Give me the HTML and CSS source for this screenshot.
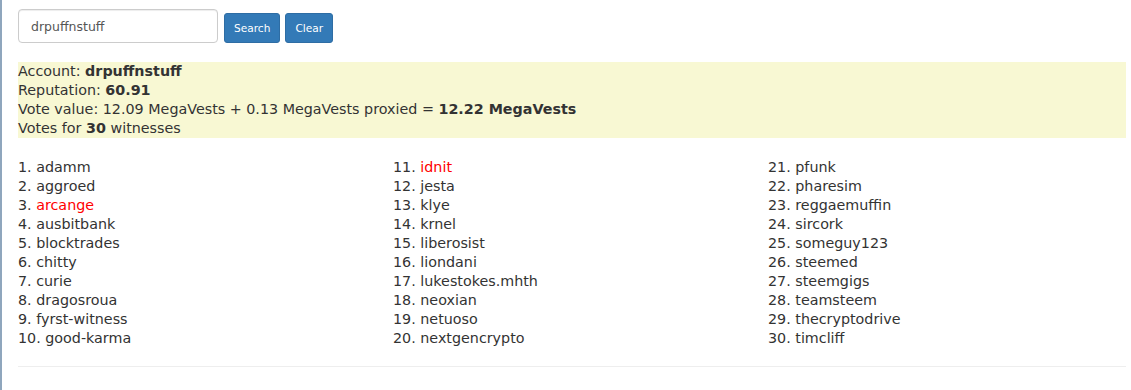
FILE: index.html
```html
<!DOCTYPE html>
<html lang="en">

    <head>
        <meta charset="UTF-8">
        <meta name="viewport" content="width=device-width, initial-scale=1.0">
        <title>Witness Votes</title>
        <link rel="stylesheet" href="styles.css">
    </head>

    <body>
        <div class="page">
            <form class="search-form">
                <input type="text" class="search-input" value="drpuffnstuff">
                <button type="button" class="btn">Search</button>
                <button type="button" class="btn">Clear</button>
            </form>

            <div class="account-info">
                <div>Account: <b>drpuffnstuff</b></div>
                <div>Reputation: <b>60.91</b></div>
                <div>Vote value: 12.09 MegaVests + 0.13 MegaVests proxied = <b>12.22 MegaVests</b></div>
                <div>Votes for <b>30</b> witnesses</div>
            </div>

            <div class="witness-list">
                <div class="col">
                    <div>1. adamm</div>
                    <div>2. aggroed</div>
                    <div>3. <span class="inactive">arcange</span></div>
                    <div>4. ausbitbank</div>
                    <div>5. blocktrades</div>
                    <div>6. chitty</div>
                    <div>7. curie</div>
                    <div>8. dragosroua</div>
                    <div>9. fyrst-witness</div>
                    <div>10. good-karma</div>
                </div>
                <div class="col">
                    <div>11. <span class="inactive">idnit</span></div>
                    <div>12. jesta</div>
                    <div>13. klye</div>
                    <div>14. krnel</div>
                    <div>15. liberosist</div>
                    <div>16. liondani</div>
                    <div>17. lukestokes.mhth</div>
                    <div>18. neoxian</div>
                    <div>19. netuoso</div>
                    <div>20. nextgencrypto</div>
                </div>
                <div class="col">
                    <div>21. pfunk</div>
                    <div>22. pharesim</div>
                    <div>23. reggaemuffin</div>
                    <div>24. sircork</div>
                    <div>25. someguy123</div>
                    <div>26. steemed</div>
                    <div>27. steemgigs</div>
                    <div>28. teamsteem</div>
                    <div>29. thecryptodrive</div>
                    <div>30. timcliff</div>
                </div>
            </div>

            <hr>
        </div>
    </body>

</html>
```

FILE: styles.css
```css
html,
body {
    margin: 0;
    height: 100%;
}

body {
    font-family: "DejaVu Sans", Verdana, sans-serif;
    font-size: 14.3px;
    line-height: 19px;
    color: #333;
    background-color: #fff;
    border-left: 2px solid #8fa6bd;
    box-sizing: border-box;
    overflow: hidden;
}

.page {
    padding: 9px 5px 0 16px;
}

.search-form {
    display: flex;
    align-items: flex-start;
    height: 34px;
}

.search-input {
    width: 200px;
    height: 34px;
    box-sizing: border-box;
    padding: 6px 12px;
    font-family: "DejaVu Sans", Verdana, sans-serif;
    font-size: 12.5px;
    color: #555;
    border: 1px solid #ccc;
    border-radius: 4px;
    box-shadow: inset 0 1px 1px rgba(0, 0, 0, .075);
}

.btn {
    margin-top: 4px;
    margin-left: 5px;
    height: 30px;
    padding: 5px 9px;
    font-family: "DejaVu Sans", Verdana, sans-serif;
    font-size: 10.6px;
    line-height: 18px;
    color: white;
    background-color: #337ab7;
    border: 1px solid #2e6da4;
    border-radius: 3px;
    cursor: pointer;
}

.search-input + .btn {
    margin-left: 6px;
}

.account-info {
    margin-top: 19px;
    background-color: #f8f8d3;
}

.witness-list {
    display: flex;
    margin-top: 20px;
}

.col {
    flex: none;
    width: 375px;
}

.inactive {
    color: red;
}

hr {
    margin: 18px 0 0;
    border: 0;
    border-top: 1px solid #eee;
}
```
